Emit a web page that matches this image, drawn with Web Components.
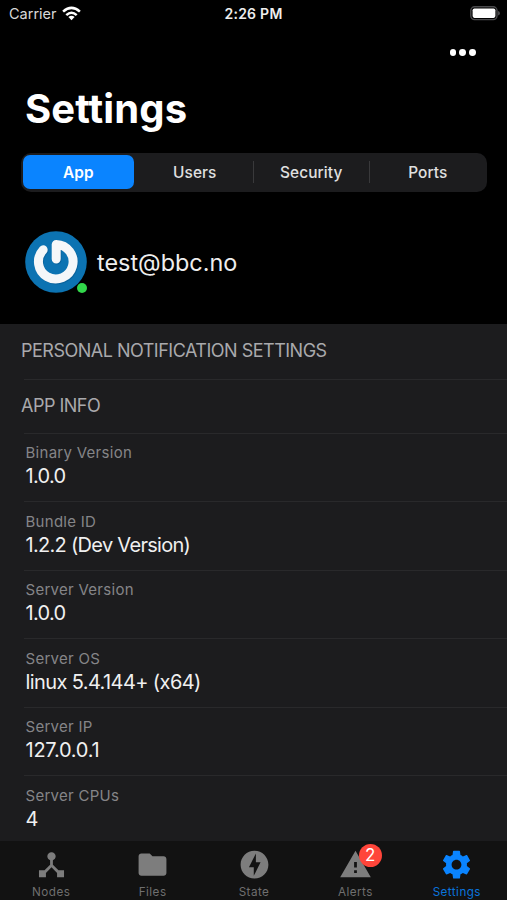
<!DOCTYPE html>
<html lang="en"><head><meta charset="utf-8"><title>Settings</title>
<style>
html,body{margin:0;background:#000}
body{width:507px;height:900px;overflow:hidden;font-family:Inter,"Liberation Sans",sans-serif;color:#fff}
</style></head><body>
<settings-app></settings-app>
<script>
const define=(name,html,setup)=>customElements.define(name,class extends HTMLElement{
  constructor(){super();this.attachShadow({mode:'open'})}
  connectedCallback(){this.shadowRoot.innerHTML=html;if(setup)setup(this,this.shadowRoot)}
});

define('status-bar',`<style>
:host{display:grid;grid-template-columns:1fr auto 1fr;height:28px;align-items:center;padding:0 7px 0 9px;box-sizing:border-box;font-size:15px;line-height:28px}
.l{display:flex;align-items:center;gap:5px;color:#d8d8d8;font-size:14.5px}.l svg{margin-bottom:2px}
.t{font-weight:600;font-size:14px;letter-spacing:.25px;color:#eee;margin-right:2px}
.r{justify-self:end;margin-bottom:1px}svg{display:block}
</style><div class="l"><span>Carrier</span>
<svg width="19" height="15" viewBox="0 0 19 15"><g fill="none" stroke="#fff" stroke-width="2.6"><path d="M1.1 5.6Q9.5-2 17.9 5.6"/><path d="M4.3 9.1Q9.5 4.4 14.7 9.1"/></g><path d="M6.4 11.1Q9.5 8.5 12.6 11.1L9.5 14.3Z" fill="#fff"/></svg></div>
<span class="t">2:26 PM</span>
<svg class="r" width="30" height="15" viewBox="0 0 30 15"><rect x=".8" y=".8" width="26.2" height="12.8" rx="3.8" fill="none" stroke="#4a4a4c" stroke-width="1.4"/><rect x="2.6" y="2.5" width="22.8" height="9.4" rx="1.8" fill="#fff"/><path d="M28 5Q30 5.4 30 7.2T28 9.4Z" fill="#4a4a4c"/></svg>`);

define('more-button',`<style>:host{display:flex;justify-content:flex-end;padding:21px 31px 0 0;gap:3px;height:36px;box-sizing:border-box}i{width:6.8px;height:6.8px;border-radius:50%;background:#fff}</style><i></i><i></i><i></i>`);

define('large-title',`<style>:host{display:block;height:90px;box-sizing:border-box;padding:20px 0 0 25px;font-size:40px;line-height:50px;font-weight:700;letter-spacing:.1px}</style><slot></slot>`);

define('segment-item',`<style>
:host{flex:1;display:flex;align-items:center;justify-content:center;height:34px;border-radius:7px;font-size:15.4px;font-weight:500;letter-spacing:.1px;color:#e0e0e0;position:relative}
:host([selected]){background:#0a84ff;color:#fff;font-weight:600}
:host([divided])::before{content:"";position:absolute;left:-3.5px;top:6px;height:22px;width:1px;background:#39393b}
</style><slot></slot>`);
define('segment-bar',`<style>:host{display:flex;gap:6px;margin:-1px 20px 0 21px;height:39px;box-sizing:border-box;padding:0 4px 1px 2px;align-items:center;border-radius:10px;background:#1c1c1e}</style><slot></slot>`);

define('user-card',`<style>
:host{display:flex;align-items:center;height:131.5px;padding:0 0 0 25px;box-sizing:border-box;gap:10px;font-size:23.4px;color:#eee}
.a{position:relative;width:62px;height:62px;margin-top:9px}svg{display:block}
.dot{position:absolute;right:0;bottom:0;width:10px;height:10px;border-radius:50%;background:#32d74b}
.n{margin-top:10px}
</style><div class="a"><svg width="62" height="62" viewBox="0 0 62 62"><circle cx="31" cy="31" r="30.8" fill="#0c73b2"/><g fill="none" stroke-width="9" stroke-linecap="round" stroke-linejoin="round"><path stroke="#075488" opacity=".5" d="M18.5 18.7A17.3 17.3 0 1 0 31.5 13.3V28" transform="translate(.5 1)"/><path stroke="#f5f7f9" d="M18.2 18.8A17.3 17.3 0 1 0 31.2 13.4V28.1"/></g></svg><span class="dot"></span></div><span class="n"><slot></slot></span>`);

define('section-header',`<style>
:host{display:block;box-sizing:border-box;height:var(--h);padding-left:21px;font-size:18px;letter-spacing:-.5px;line-height:var(--line,54px);color:#a9a9ac;position:relative}
hr{position:absolute;left:24px;right:0;bottom:0;height:1px;margin:0;border:0;background:#29292b}
</style><slot></slot><hr>`);
define('info-row',`<style>
:host{display:flex;flex-direction:column;box-sizing:border-box;height:68.5px;padding:9.6px 0 0 1.5px;margin-left:24px;border-bottom:1px solid #29292b}
.k{font-size:15px;line-height:20px;color:#858588;letter-spacing:.28px}.v{font-size:20px;line-height:27px;color:#f0f0f0;letter-spacing:-.7px}
:host([last]){border:0}
</style><span class="k"></span><span class="v"><slot></slot></span>`,(e,r)=>{r.querySelector('.k').textContent=e.getAttribute('label');if(e.hasAttribute('spacing'))r.querySelector('.v').style.letterSpacing=e.getAttribute('spacing')});
define('settings-list',`<style>:host{display:block;background:#1c1c1e;height:517.5px;overflow:hidden}</style><slot></slot>`);

const icons={
nodes:'M17 16l-4-4V8.82C14.16 8.4 15 7.3 15 6c0-1.66-1.34-3-3-3S9 4.34 9 6c0 1.3.84 2.4 2 2.82V12l-4 4H3v5h5v-3.05l4-4.2 4 4.2V21h5v-5h-4z',
files:'M10 4H4c-1.1 0-1.99.9-1.99 2L2 18c0 1.1.9 2 2 2h16c1.1 0 2-.9 2-2V8c0-1.1-.9-2-2-2h-8l-2-2z',
state:'M12 2.02c-5.51 0-9.98 4.47-9.98 9.98s4.47 9.98 9.98 9.98 9.98-4.47 9.98-9.98S17.51 2.02 12 2.02zM11.48 20v-6.26H8L13 4v6.26h3.35L11.48 20z',
alerts:'M1 21h22L12 2 1 21zm12-3h-2v-2h2v2zm0-4h-2v-4h2v4z',
settings:'M19.43 12.98c.04-.32.07-.64.07-.98s-.03-.66-.07-.98l2.11-1.65c.19-.15.24-.42.12-.64l-2-3.46c-.12-.22-.39-.3-.61-.22l-2.49 1c-.52-.4-1.08-.73-1.69-.98l-.38-2.65C14.46 2.18 14.25 2 14 2h-4c-.25 0-.46.18-.49.42l-.38 2.65c-.61.25-1.17.59-1.69.98l-2.49-1c-.23-.09-.49 0-.61.22l-2 3.46c-.13.22-.07.49.12.64l2.11 1.65c-.04.32-.07.65-.07.98s.03.66.07.98l-2.11 1.65c-.19.15-.24.42-.12.64l2 3.46c.12.22.39.3.61.22l2.49-1c.52.4 1.08.73 1.69.98l.38 2.65c.03.24.24.42.49.42h4c.25 0 .46-.18.49-.42l.38-2.65c.61-.25 1.17-.59 1.69-.98l2.49 1c.23.09.49 0 .61-.22l2-3.46c.12-.22.07-.49-.12-.64l-2.11-1.65zM12 15.5c-1.93 0-3.5-1.57-3.5-3.5s1.57-3.5 3.5-3.5 3.5 1.57 3.5 3.5-1.57 3.5-3.5 3.5z'};
define('tab-item',`<style>
:host{flex:1;display:flex;flex-direction:column;align-items:center;padding-top:6.6px;color:#7d7d7d;font-size:11.7px;letter-spacing:.45px;position:relative}
:host([selected]){color:#0a84ff}:host([selected]) span{color:#0a74dc}
svg{display:block;fill:currentColor;margin-left:1px}span{line-height:16px;margin:3px 0 0 1px;color:#6f6f6f}
b{position:absolute;left:54.5px;top:3px;width:23px;height:23px;border-radius:50%;background:#ff453a;color:#fff;font-weight:400;font-size:17px;line-height:23px;text-align:center;letter-spacing:0}
</style><svg width="35" height="35" viewBox="0 0 24 24"><path/></svg><span><slot></slot></span>`,(e,r)=>{r.querySelector('path').setAttribute('d',icons[e.getAttribute('icon')]);if(e.hasAttribute('badge')){const b=document.createElement('b');b.textContent=e.getAttribute('badge');r.append(b)}});
define('tab-bar',`<style>:host{display:flex;height:59px;background:#121212;overflow:hidden}</style><slot></slot>`);

define('settings-app',`<style>:host{display:flex;flex-direction:column;width:507px;height:900px;overflow:hidden;background:#000}:host>*{flex:none}</style>
<status-bar></status-bar><more-button></more-button><large-title>Settings</large-title>
<segment-bar><segment-item selected>App</segment-item><segment-item>Users</segment-item><segment-item divided>Security</segment-item><segment-item divided>Ports</segment-item></segment-bar>
<user-card>test@bbc.no</user-card>
<settings-list>
<section-header style="--h:56px">PERSONAL NOTIFICATION SETTINGS</section-header>
<section-header style="--h:54px;--line:52px">APP INFO</section-header>
<info-row label="Binary Version">1.0.0</info-row><info-row label="Bundle ID">1.2.2 (Dev Version)</info-row><info-row label="Server Version">1.0.0</info-row><info-row label="Server OS" spacing="-.6px">linux 5.4.144+ (x64)</info-row><info-row label="Server IP" spacing="-.25px">127.0.0.1</info-row><info-row label="Server CPUs" last>4</info-row>
</settings-list>
<tab-bar><tab-item icon="nodes">Nodes</tab-item><tab-item icon="files">Files</tab-item><tab-item icon="state">State</tab-item><tab-item icon="alerts" badge="2">Alerts</tab-item><tab-item icon="settings" selected>Settings</tab-item></tab-bar>`);
</script></body></html>
